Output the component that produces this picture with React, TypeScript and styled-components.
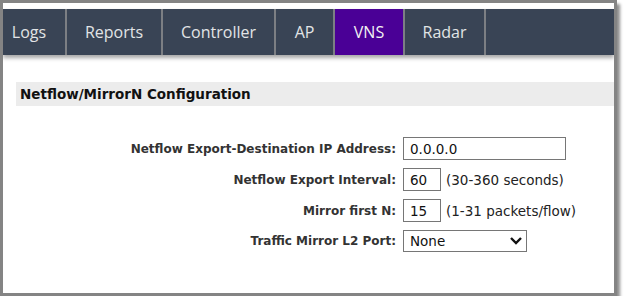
import React from "react";
import styled, { createGlobalStyle } from "styled-components";

const Global = createGlobalStyle`
  html, body { margin: 0; padding: 0; background: #fff; }
  body { font-family: "DejaVu Sans", Verdana, sans-serif; }
`;

const Frame = styled.div`
  width: 611px;
  height: 290px;
  border: 3px solid #848484;
  background: #fff;
  box-shadow: 3px 4px 3px rgba(0, 0, 0, 0.45);
  overflow: hidden;
`;

const Nav = styled.nav`
  margin-top: 6px;
  height: 46px;
  background: #394455;
  display: flex;
  box-shadow: 0 3px 4px rgba(0, 0, 0, 0.35);
  position: relative;
`;

const Tab = styled.div<{ $w: number; $active?: boolean; $first?: boolean }>`
  width: ${(p) => p.$w}px;
  margin-left: ${(p) => (p.$first ? "-10px" : "0")};
  flex-shrink: 0;
  box-sizing: border-box;
  display: flex;
  align-items: center;
  justify-content: center;
  font-family: "Open Sans", sans-serif;
  font-size: 16px;
  color: ${(p) => (p.$active ? "#f2f2f2" : "#e2e4e6")};
  background: ${(p) => (p.$active ? "#4a0096" : "#394455")};
  border-right: 2px solid #7c7f84;
`;

const Section = styled.section`
  margin: 27px 0 0 13px;
`;

const Header = styled.h2`
  margin: 0;
  height: 24px;
  background: #ececec;
  display: flex;
  align-items: center;
  padding-left: 4px;
  font-size: 13.5px;
  font-weight: bold;
  color: #111;
`;

const Form = styled.div`
  margin-top: 31px;
  display: grid;
  grid-template-columns: 380px auto;
  column-gap: 7px;
  row-gap: 8px;
  align-items: center;
`;

const Label = styled.label`
  text-align: right;
  font-size: 12px;
  font-weight: bold;
  color: #333;
`;

const Field = styled.div`
  display: flex;
  align-items: center;
  gap: 5px;
`;

const TextInput = styled.input<{ $w: number }>`
  width: ${(p) => p.$w}px;
  height: 23px;
  box-sizing: border-box;
  border: 1px solid #767676;
  padding: 0 6px;
  font-family: "DejaVu Sans", Verdana, sans-serif;
  font-size: 13.5px;
  color: #111;
  outline: none;
`;

const Hint = styled.span`
  font-size: 13.5px;
  color: #222;
`;

const Select = styled.div`
  width: 124px;
  height: 22px;
  box-sizing: border-box;
  border: 1px solid #767676;
  display: flex;
  align-items: center;
  justify-content: space-between;
  padding: 0 3px 0 6px;
  font-size: 13.5px;
  color: #111;
`;

const tabs = [
  { t: "Logs", w: 74, f: true },
  { t: "Reports", w: 96 },
  { t: "Controller", w: 113 },
  { t: "AP", w: 59 },
  { t: "VNS", w: 70, a: true },
  { t: "Radar", w: 81 },
];

export default function App() {
  return (
    <>
      <Global />
      <Frame>
        <Nav>
          {tabs.map((x) => (
            <Tab key={x.t} $w={x.w} $active={x.a} $first={x.f}>
              {x.t}
            </Tab>
          ))}
        </Nav>
        <Section>
          <Header>Netflow/MirrorN Configuration</Header>
          <Form>
            <Label>Netflow Export-Destination IP Address:</Label>
            <Field>
              <TextInput $w={163} defaultValue="0.0.0.0" />
            </Field>
            <Label>Netflow Export Interval:</Label>
            <Field>
              <TextInput $w={38} defaultValue="60" />
              <Hint>(30-360 seconds)</Hint>
            </Field>
            <Label>Mirror first N:</Label>
            <Field>
              <TextInput $w={38} defaultValue="15" />
              <Hint>(1-31 packets/flow)</Hint>
            </Field>
            <Label>Traffic Mirror L2 Port:</Label>
            <Field>
              <Select>
                <span>None</span>
                <svg width="14" height="10" viewBox="0 0 14 10">
                  <path d="M2 2 L7 7 L12 2" fill="none" stroke="#111" strokeWidth="2.4" />
                </svg>
              </Select>
            </Field>
          </Form>
        </Section>
      </Frame>
    </>
  );
}
